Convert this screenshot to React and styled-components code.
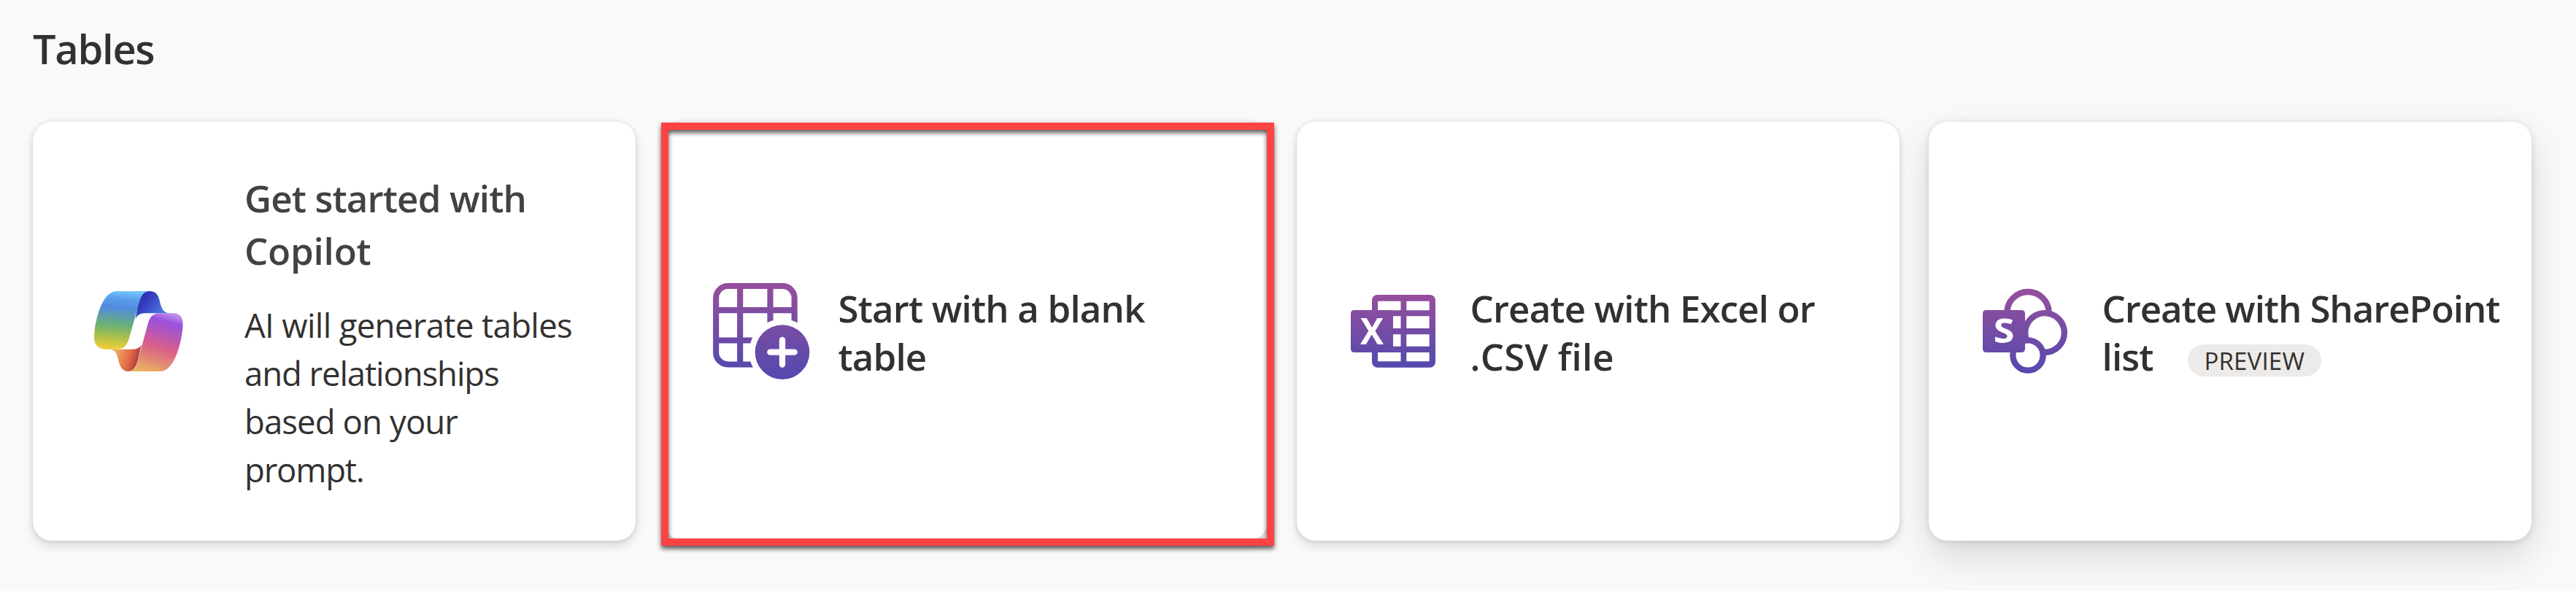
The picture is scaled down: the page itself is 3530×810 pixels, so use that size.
import React from "react";
import styled, { createGlobalStyle, css } from "styled-components";

const GlobalStyle = createGlobalStyle`
  * { box-sizing: border-box; }
  body {
    margin: 0;
    background: #faf9f8;
    color: #323130;
    font-family: "Open Sans", "Noto Sans", sans-serif;
  }
`;

const Page = styled.main`
  width: 3530px;
  height: 810px;
  overflow: hidden;
  padding: 28px 0 0 45px;
`;

const SectionTitle = styled.h1`
  margin: 0 0 63px;
  font-size: 56px;
  font-weight: 600;
  line-height: 76px;
  letter-spacing: -1.3px;
`;

const CardGrid = styled.section`
  display: grid;
  grid-template-columns: repeat(4, 826px);
  grid-auto-rows: 574px;
  column-gap: 40px;
`;

const Card = styled.article`
  position: relative;
  display: flex;
  align-items: center;
  gap: ${(p) => (p.$wide ? "71px" : "18.5px")};
  padding: 2px 0 0 49px;
  border-radius: 26px;
  background: #fff;
  box-shadow: 0 0 7px rgba(0, 0, 0, 0.1), 0 7px 13px rgba(0, 0, 0, 0.13);
  ${(p) =>
    p.$raised &&
    css`
      box-shadow: 0 2px 12px rgba(0, 0, 0, 0.12), 0 22px 52px rgba(0, 0, 0, 0.13);
    `}
`;

const Highlight = styled.div`
  position: absolute;
  left: -5px;
  top: 1px;
  width: 840px;
  height: 580px;
  border: 10px solid #ff4343;
  filter: drop-shadow(0 4px 3px rgba(0, 0, 0, 0.65));
`;

const Icon = styled.svg`
  flex: none;
  width: 170px;
  height: 170px;
`;

const Content = styled.div`
  flex: 1;
  min-width: 0;
`;

const Heading = styled.h2`
  margin: 0;
  color: ${(p) => (p.$lead ? "#424242" : "#323130")};
  font-size: 51px;
  font-weight: 600;
  line-height: ${(p) => (p.$lead ? "72px" : "66px")};
`;

const Description = styled.p`
  margin: 33px 0 0;
  font-size: 45.5px;
  line-height: 66px;
`;

const Line = styled.span`
  display: block;
  white-space: nowrap;
  letter-spacing: ${(p) => p.$track || 0}px;
`;

const Badge = styled.span`
  display: inline-block;
  width: 183px;
  height: 44px;
  margin-left: 47px;
  border-radius: 22px;
  background: #edebe9;
  font-size: 33px;
  font-weight: 450;
  line-height: 46px;
  letter-spacing: 0.2px;
  text-align: center;
  vertical-align: 1px;
`;

const Glyph = styled.text`
  font-family: "Open Sans", sans-serif;
  font-weight: 700;
  fill: #fff;
`;

function PurpleGradient({ id, y1, y2 }) {
  return (
    <linearGradient id={id} gradientUnits="userSpaceOnUse" x1="0" y1={y1} x2="0" y2={y2}>
      <stop offset="0" stopColor="#964f9c" />
      <stop offset="1" stopColor="#5349ae" />
    </linearGradient>
  );
}

function CopilotIcon() {
  return (
    <Icon viewBox="-48 -30 510 510" aria-hidden="true">
      <defs>
        <linearGradient id="cpBack" gradientUnits="userSpaceOnUse" x1="262" y1="90" x2="345" y2="150">
          <stop offset="0" stopColor="#3232bb" />
          <stop offset="1" stopColor="#4c82e2" />
        </linearGradient>
        <linearGradient id="cpLeft" gradientUnits="userSpaceOnUse" x1="165" y1="57" x2="145" y2="296">
          <stop offset="0" stopColor="#76c3fa" />
          <stop offset="0.13" stopColor="#5a9eea" />
          <stop offset="0.28" stopColor="#518bde" />
          <stop offset="0.6" stopColor="#6db274" />
          <stop offset="0.77" stopColor="#a3bf4c" />
          <stop offset="0.97" stopColor="#e9cb3c" />
        </linearGradient>
        <linearGradient id="cpFold" gradientUnits="userSpaceOnUse" x1="145" y1="315" x2="240" y2="345">
          <stop offset="0" stopColor="#ecaa64" />
          <stop offset="0.6" stopColor="#e16846" />
          <stop offset="1" stopColor="#a93a40" />
        </linearGradient>
        <linearGradient id="cpRight" gradientUnits="userSpaceOnUse" x1="355" y1="148" x2="285" y2="395">
          <stop offset="0" stopColor="#bd8bea" />
          <stop offset="0.13" stopColor="#9b51df" />
          <stop offset="0.32" stopColor="#b457b8" />
          <stop offset="0.56" stopColor="#da5f87" />
          <stop offset="0.8" stopColor="#e28b74" />
          <stop offset="1" stopColor="#ebb35e" />
        </linearGradient>
      </defs>
      <path fill="url(#cpBack)" d="M285 57C306 57 319 68 325 92C333 122 337 147 373 148H262C244 149 234 156 227 172L238 108C246 74 258 57 285 57Z" />
      <path fill="url(#cpFold)" d="M115 296C145 297 151 314 157 343C164 373 176 387 197 387C218 387 230 368 237 340L252 277C245 290 234 296 212 296Z" />
      <path fill="url(#cpLeft)" d="M150 57H285C261 57 250 75 242 105L203 243C194 277 183 294 152 296H103C73 294 57 279 57 246C58 192 85 57 150 57Z" />
      <path fill="url(#cpRight)" d="M325 148H383C409 149 422 164 422 196C420 252 391 387 330 387H197C218 387 229 370 237 342L277 195C286 164 296 149 325 148Z" />
    </Icon>
  );
}

function TableIcon() {
  return (
    <Icon viewBox="0 0 510 510" aria-hidden="true">
      <defs>
        <PurpleGradient id="tbFill" y1="54" y2="450" />
        <PurpleGradient id="tbGrid" y1="54" y2="425" />
        <mask id="tbCut" maskUnits="userSpaceOnUse" x="0" y="0" width="510" height="510">
          <rect width="510" height="510" fill="#fff" />
          <circle cx="336" cy="338" r="136" fill="#000" />
        </mask>
      </defs>
      <g mask="url(#tbCut)" stroke="url(#tbGrid)" strokeWidth="24.5" fill="none">
        <rect x="63.5" y="66" width="322.5" height="322.5" rx="49" />
        <path d="M162.5 66V388M286.5 66V388.5M63 165.5H386M63 289.5H386.5" />
      </g>
      <circle cx="336" cy="338" r="112" fill="url(#tbFill)" />
      <path d="M286 338H386M336 288V389" stroke="#fff" strokeWidth="25" strokeLinecap="round" />
    </Icon>
  );
}

function ExcelIcon() {
  return (
    <Icon viewBox="-42 -45 510 510" aria-hidden="true">
      <defs>
        <PurpleGradient id="xlFill" y1="57" y2="356" />
      </defs>
      <rect x="120" y="57" width="261" height="299" rx="23" fill="url(#xlFill)" />
      <path
        fill="#fff"
        d="M144.5 83H238.5V121H144.5ZM262 83H356V121H262ZM207 145H238.5V195H207ZM262 145H356V195H262ZM207 219.5H238.5V269.5H207ZM262 219.5H356V269.5H262ZM144.5 294H238.5V331H144.5ZM262 294H356V331H262Z"
      />
      <rect x="33" y="120" width="174" height="174" rx="14" fill="url(#xlFill)" />
      <Glyph x="72" y="262" fontSize="153" textLength="96" lengthAdjust="spacingAndGlyphs">X</Glyph>
    </Icon>
  );
}

function SharePointIcon() {
  return (
    <Icon viewBox="-24 -30 510 510" aria-hidden="true">
      <defs>
        <PurpleGradient id="spFill" y1="48" y2="395" />
      </defs>
      <g fill="#fff" stroke="url(#spFill)" strokeWidth="25">
        <circle cx="237" cy="146" r="86" />
        <circle cx="306" cy="228" r="80.5" />
        <circle cx="237" cy="321" r="62" />
      </g>
      <rect x="51" y="135" width="174" height="174" rx="14" fill="url(#spFill)" />
      <Glyph x="95" y="271" fontSize="140" textLength="86" lengthAdjust="spacingAndGlyphs">S</Glyph>
    </Icon>
  );
}

export default function App() {
  return (
    <>
      <GlobalStyle />
      <Page>
        <SectionTitle>Tables</SectionTitle>
        <CardGrid>
          <Card $wide>
            <CopilotIcon />
            <Content>
              <Heading $lead>
                <Line $track={-0.83}>Get started with</Line>
                <Line $track={-0.2}>Copilot</Line>
              </Heading>
              <Description>
                <Line $track={-0.65}>AI will generate tables</Line>
                <Line $track={-1.1}>and relationships</Line>
                <Line $track={-0.9}>based on your</Line>
                <Line $track={-1.2}>prompt.</Line>
              </Description>
            </Content>
          </Card>
          <Card>
            <TableIcon />
            <Content>
              <Heading>
                <Line $track={-0.82}>Start with a blank</Line>
                <Line $track={-0.86}>table</Line>
              </Heading>
            </Content>
            <Highlight />
          </Card>
          <Card>
            <ExcelIcon />
            <Content>
              <Heading>
                <Line $track={-0.86}>Create with Excel or</Line>
                <Line $track={0.2}>.CSV file</Line>
              </Heading>
            </Content>
          </Card>
          <Card $raised>
            <SharePointIcon />
            <Content>
              <Heading>
                <Line $track={-1.07}>Create with SharePoint</Line>
                <Line $track={-0.8}>
                  list
                  <Badge>PREVIEW</Badge>
                </Line>
              </Heading>
            </Content>
          </Card>
        </CardGrid>
      </Page>
    </>
  );
}
